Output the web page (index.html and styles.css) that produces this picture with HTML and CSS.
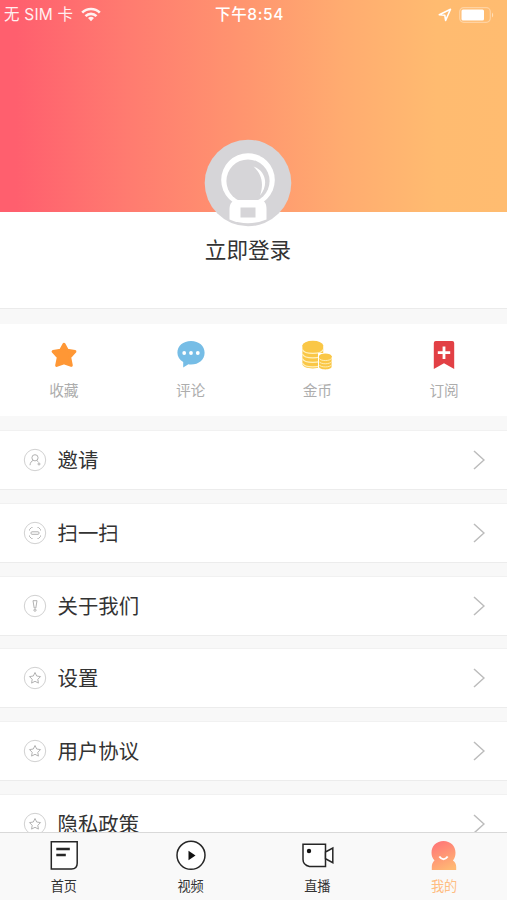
FILE: index.html
```
<!DOCTYPE html>
<html lang="zh-CN">
<head>
    <meta charset="utf-8">
    <title>我的</title>
    <link rel="stylesheet" href="styles.css">
</head>
<body>
    <div class="app">
        <header class="banner">
            <div class="status">
                <div class="carrier">
                    <span>无 SIM 卡</span>
                    <svg width="20" height="15" viewBox="0 0 20 15" fill="none" stroke="#fff" stroke-width="2.6">
                        <path d="M1.2 5.6a12.4 12.4 0 0 1 17.6 0"/>
                        <path d="M4.5 9.1a7.8 7.8 0 0 1 11 0"/>
                        <path d="M10 14.2l-3-3.1a4.3 4.3 0 0 1 6 0z" fill="#fff" stroke="none"/>
                    </svg>
                </div>
                <div class="clock">下午8:54</div>
                <div class="power">
                    <svg width="14" height="14" viewBox="0 0 14 14" fill="none" stroke="#fff" stroke-width="1.6" stroke-linejoin="round">
                        <path d="M1.3 6.8L12.5 1.3 7.6 12.5 6.8 7.2z"/>
                    </svg>
                    <svg width="36" height="16" viewBox="0 0 36 16">
                        <rect x=".7" y=".7" width="30.6" height="14.6" rx="4" fill="none" stroke="#fff" stroke-opacity=".35" stroke-width="1.2"/>
                        <rect x="2.5" y="2.6" width="22.5" height="10.8" rx="1.5" fill="#fff"/>
                        <path d="M33 5.400q2.400 2.600 0 5.200z" fill="#fff" fill-opacity=".5"/>
                    </svg>
                </div>
            </div>
        </header>

        <section class="profile">
            <svg class="avatar" width="88" height="88" viewBox="0 0 88 88">
                <circle cx="44" cy="44" r="43.300" fill="#d6d5d8"/>
                <circle cx="44" cy="41" r="26.800" fill="#fff"/>
                <circle cx="44" cy="42" r="21.600" fill="#d6d5d8"/>
                <path d="M49.500 27.500C61 31 65.500 45 56 56.500C60 45 58 35 49.500 27.500z" fill="#fff"/>
                <path d="M33 61h23c4 0 6.500 3 6.500 9v10.500q-18.500 7.500-37 0V70c0-6 3.500-9 7.500-9z" fill="#fff"/>
                <rect x="36.500" y="68.500" width="15" height="10" fill="#d6d5d8"/>
            </svg>
            <div class="login">立即登录</div>
        </section>

        <nav class="actions">
            <a class="action">
                <svg width="30" height="30" viewBox="0 0 30 30">
                    <path d="M15 4.200l3.300 6 7.600 1.300-5.200 5.700 1.600 8.200-7.300-2.600-7.300 2.600 1.600-8.200-5.200-5.700 7.600-1.300z" fill="#ff9735" stroke="#ff9735" stroke-width="3" stroke-linejoin="round"/>
                </svg>
                <span>收藏</span>
            </a>
            <a class="action">
                <svg width="30" height="30" viewBox="0 0 30 30">
                    <path d="M15 1C23 1 28.600 6 28.600 12.800S23 24.600 15 24.600q-1.200 0-2.600-.3L7.200 27.600V22C3.600 20 1.400 16.800 1.400 12.800 1.400 6 7 1 15 1z" fill="#76bde6"/>
                    <circle cx="8.200" cy="13" r="1.900" fill="#fff"/>
                    <circle cx="15" cy="13" r="1.900" fill="#fff"/>
                    <circle cx="21.800" cy="13" r="1.900" fill="#fff"/>
                </svg>
                <span>评论</span>
            </a>
            <a class="action">
                <svg width="30" height="30" viewBox="0 0 30 30">
                    <path d="M.4 5.500v18.500c0 2.500 4.500 4.400 10.400 4.400s10.400-2 10.400-4.400V5.500z" fill="#fac746"/>
                    <ellipse cx="10.800" cy="5.600" rx="10.400" ry="4.800" fill="#fac746"/>
                    <path d="M.4 9.500c2 5.200 18.800 5.200 20.800 0M.4 14c2 5.200 18.800 5.200 20.800 0M.4 18.500c2 5.200 18.800 5.200 20.800 0M.4 23c2 5.200 18.800 5.200 20.800 0" fill="none" stroke="#fff0bd" stroke-width="1.100"/>
                    <path d="M16 13h14v17H16z" fill="#fff"/>
                    <path d="M17 16v10.800c0 1.500 2.700 2.600 6.300 2.600s6.300-1.100 6.300-2.600V16z" fill="#fac746"/>
                    <ellipse cx="23.300" cy="16.200" rx="6.300" ry="2.800" fill="#fac746"/>
                    <path d="M17 18.300c1.500 3 11.100 3 12.600 0M17 21.500c1.500 3 11.100 3 12.600 0M17 24.700c1.500 3 11.100 3 12.600 0" fill="none" stroke="#fff0bd" stroke-width=".9"/>
                </svg>
                <span>金币</span>
            </a>
            <a class="action">
                <svg width="30" height="30" viewBox="0 0 30 30">
                    <path d="M6.800 1h16.400q2 0 2 2v26L15 23.200 4.800 29V3q0-2 2-2z" fill="#e24045"/>
                    <path d="M15 6.500v12.400M8.800 12.700h12.400" stroke="#fff" stroke-width="2.800"/>
                </svg>
                <span>订阅</span>
            </a>
        </nav>

        <main class="menu">
            <a class="row">
                <svg class="mark" viewBox="0 0 24 24">
                    <circle class="ring" cx="12" cy="12" r="10.700"/>
                    <circle cx="12" cy="9.800" r="3.100"/>
                    <path d="M7 17.200c.3-2.800 1.500-4.200 3.300-4.800M13.700 12.400l1.800 1.700M16 14.500v3M14.500 16h3"/>
                </svg>
                <span>邀请</span>
                <svg class="arrow" viewBox="0 0 12 20"><path d="M1 1l10 9-10 9"/></svg>
            </a>
            <a class="row">
                <svg class="mark" viewBox="0 0 24 24">
                    <circle class="ring" cx="12" cy="12" r="10.700"/>
                    <path d="M6.500 9.500v-1l2-2h1M14.500 6.500h1l2 2v1M17.500 14.500v1l-2 2h-1M9.500 17.500h-1l-2-2v-1"/>
                    <rect x="8" y="10.800" width="8" height="2.500" rx="1"/>
                </svg>
                <span>扫一扫</span>
                <svg class="arrow" viewBox="0 0 12 20"><path d="M1 1l10 9-10 9"/></svg>
            </a>
            <a class="row">
                <svg class="mark" viewBox="0 0 24 24">
                    <circle class="ring" cx="12" cy="12" r="10.700"/>
                    <path d="M10 6.700h4l-1.200 7.300h-1.600z"/>
                    <circle cx="12" cy="16.200" r="1.100"/>
                </svg>
                <span>关于我们</span>
                <svg class="arrow" viewBox="0 0 12 20"><path d="M1 1l10 9-10 9"/></svg>
            </a>
            <a class="row">
                <svg class="mark" viewBox="0 0 24 24">
                    <circle class="ring" cx="12" cy="12" r="10.700"/>
                    <path d="M12 6.500l1.700 3.500 3.800.6-2.700 2.700.6 3.800-3.400-1.800-3.400 1.800.6-3.800-2.700-2.700 3.800-.6z"/>
                </svg>
                <span>设置</span>
                <svg class="arrow" viewBox="0 0 12 20"><path d="M1 1l10 9-10 9"/></svg>
            </a>
            <a class="row">
                <svg class="mark" viewBox="0 0 24 24">
                    <circle class="ring" cx="12" cy="12" r="10.700"/>
                    <path d="M12 6.500l1.700 3.500 3.800.6-2.700 2.700.6 3.800-3.400-1.800-3.400 1.800.6-3.800-2.700-2.700 3.800-.6z"/>
                </svg>
                <span>用户协议</span>
                <svg class="arrow" viewBox="0 0 12 20"><path d="M1 1l10 9-10 9"/></svg>
            </a>
            <a class="row">
                <svg class="mark" viewBox="0 0 24 24">
                    <circle class="ring" cx="12" cy="12" r="10.700"/>
                    <path d="M12 6.500l1.700 3.500 3.800.6-2.700 2.700.6 3.800-3.400-1.800-3.400 1.800.6-3.800-2.700-2.700 3.800-.6z"/>
                </svg>
                <span>隐私政策</span>
                <svg class="arrow" viewBox="0 0 12 20"><path d="M1 1l10 9-10 9"/></svg>
            </a>
        </main>

        <footer class="tabs">
            <a class="tab">
                <svg width="34" height="32" viewBox="0 0 34 32" fill="none" stroke="#262626" stroke-width="1.500">
                    <path d="M4.300 1.800h25.900v21.500q0 5.700-5.700 5.700H4.300z" fill="#fff"/>
                    <path d="M9.300 9h13.500M9.300 15h9.500" stroke-width="2.400"/>
                </svg>
                <span>首页</span>
            </a>
            <a class="tab">
                <svg width="34" height="32" viewBox="0 0 34 32">
                    <circle cx="17" cy="15.300" r="14" fill="#fff" stroke="#262626" stroke-width="1.500"/>
                    <path d="M14.500 10.800l7 4.700-7 4.700z" fill="#111"/>
                </svg>
                <span>视频</span>
            </a>
            <a class="tab">
                <svg width="34" height="32" viewBox="0 0 34 32" fill="#fff" stroke="#262626" stroke-width="1.500">
                    <path d="M3 4.200h22.500v22.300H9.500Q3 25 3 19.500z"/>
                    <path d="M25.500 12l7.300-4v14.700l-7.300-4z"/>
                    <circle cx="9" cy="11" r="2.200" fill="#111" stroke="none"/>
                </svg>
                <span>直播</span>
            </a>
            <a class="tab active">
                <svg width="34" height="32" viewBox="0 0 34 32">
                    <defs>
                        <linearGradient id="me" x1=".3" y1="0" x2=".7" y2="1">
                            <stop offset="0" stop-color="#ff7777"/>
                            <stop offset="1" stop-color="#ffb974"/>
                        </linearGradient>
                    </defs>
                    <path d="M16.500 1C23.500 1 28.500 6 28.500 12.800c0 3.200-.9 5.800-2.600 7.700 2.200 1.700 3.300 3.800 3.300 6.200v3.300H4.800v-3.300c0-2.400 1-4.500 2.700-6.200-2-2-3-4.600-3-7.700C4.500 6 9.500 1 16.500 1z" fill="url(#me)"/>
                    <path d="M12.300 16.500q4.200 5.600 8.400 0" fill="none" stroke="#fff" stroke-width="2"/>
                </svg>
                <span>我的</span>
            </a>
        </footer>
    </div>
</body>
</html>
```
FILE: styles.css
```
* {
    box-sizing: border-box;
}
body {
    margin: 0;
    background: #f8f8f8;
    color: #333;
    font-family: "Liberation Sans", "Noto Sans CJK SC", sans-serif;
}
svg {
    display: block;
    flex: none;
}
.app {
    display: flex;
    flex-direction: column;
    height: 900px;
    overflow: hidden;
}

/* banner */
.banner {
    flex: none;
    height: 212px;
    background: linear-gradient(to right, #ff5f6e 3%, #ff7b70 25%, #ff946f 47%, #ffac70 68%, #ffbb70 86%, #ffbc70);
}
.status {
    display: grid;
    grid-template-columns: 1fr auto 1fr;
    align-items: center;
    height: 29px;
    padding: 0 12px 0 4px;
    color: #fff;
    font-family: Inter, "Noto Sans CJK SC", sans-serif;
    font-size: 15.5px;
    line-height: 20px;
}
.carrier {
    display: flex;
    align-items: center;
    gap: 8px;
    letter-spacing: .2px;
    opacity: .9;
}
.clock {
    font-weight: 500;
    letter-spacing: .6px;
}
.power {
    display: flex;
    align-items: center;
    justify-content: flex-end;
    gap: 7px;
}

/* profile */
.profile {
    display: flex;
    flex: none;
    flex-direction: column;
    align-items: center;
    height: 97px;
    padding-right: 11px;
    background: #fff;
    border-bottom: 1px solid #ebebeb;
}
.avatar {
    margin-top: -73px;
}
.login {
    margin-top: 9px;
    font-size: 21.6px;
    line-height: 30px;
}

/* shortcuts */
.actions {
    display: grid;
    flex: none;
    grid-template-columns: repeat(4, 1fr);
    height: 92px;
    margin: 15px 0 14px;
    padding-top: 16px;
    background: #fff;
}
.action {
    display: flex;
    flex-direction: column;
    align-items: center;
    gap: 10px;
    padding-left: 1px;
    color: #adadad;
    font-size: 14.7px;
    line-height: 22px;
}

/* menu rows */
.menu {
    display: flex;
    flex: 1;
    flex-direction: column;
    gap: 12.8px;
    min-height: 0;
    overflow: hidden;
}
.row {
    display: flex;
    flex: none;
    align-items: center;
    height: 60px;
    padding: 0 22.5px;
    background: #fff;
    border-top: 1px solid #f1f1f1;
    border-bottom: 1px solid #ececec;
    font-size: 20.4px;
    line-height: 30px;
}
.row span {
    padding-top: 2px;
}
.mark {
    width: 24px;
    height: 24px;
    margin-right: 11px;
    fill: none;
    stroke: #a9a9a9;
    stroke-width: .9;
}
.ring {
    stroke: #cbcbcb;
}
.arrow {
    width: 12px;
    height: 20px;
    margin-left: auto;
    fill: none;
    stroke: #bcbcbc;
    stroke-width: 1.5;
}

/* tab bar */
.tabs {
    display: grid;
    flex: none;
    grid-template-columns: repeat(4, 1fr);
    height: 68px;
    padding-top: 7px;
    background: #f9f9f9;
    border-top: 1px solid #d9d9d9;
}
.tab {
    display: flex;
    flex-direction: column;
    align-items: center;
    gap: 5px;
    padding-left: 1px;
    font-size: 13.2px;
    line-height: 20px;
}
.active {
    color: #ffbd82;
}
```
